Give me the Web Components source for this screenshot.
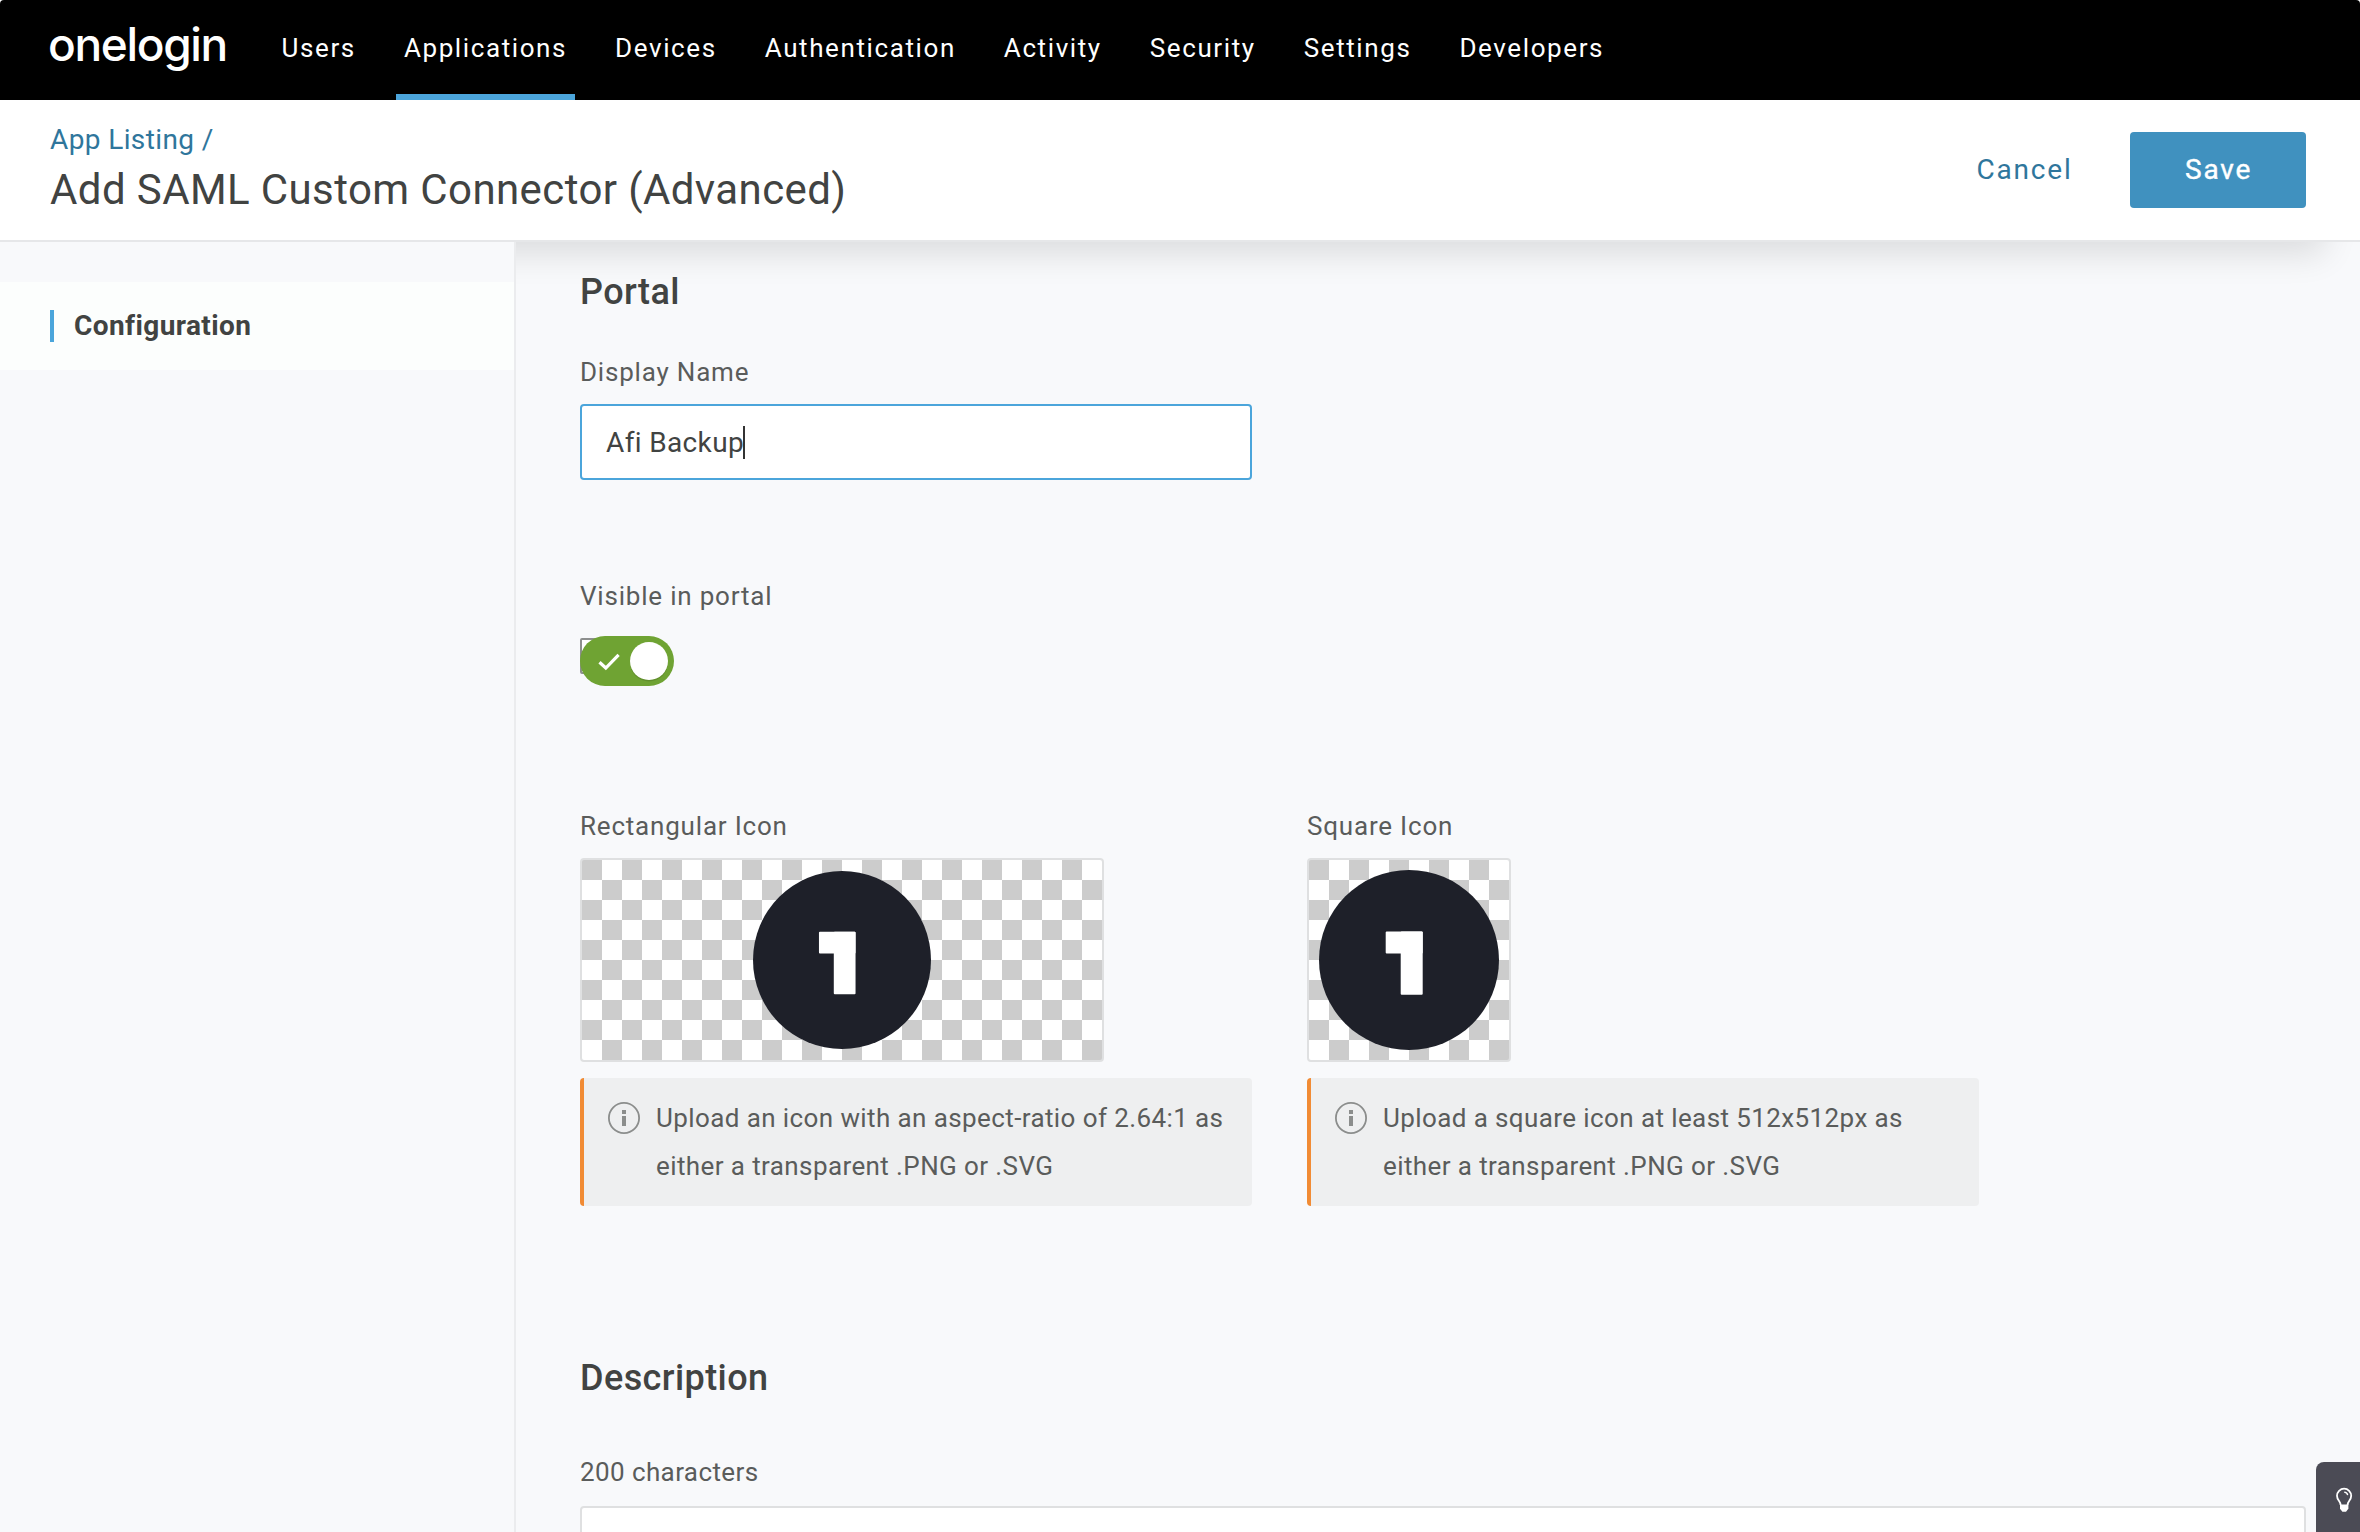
<!DOCTYPE html>
<html lang="en">
<head>
<meta charset="utf-8">
<title>OneLogin</title>
<style>
  html, body { margin: 0; height: 100%; overflow: hidden; background: #fff; }
  body { font-family: Roboto, "Liberation Sans", sans-serif; color: #414342; }
</style>
</head>
<body>
<ol-app>
  <ol-topnav slot="nav">
    <ol-nav-item>Users</ol-nav-item>
    <ol-nav-item active>Applications</ol-nav-item>
    <ol-nav-item>Devices</ol-nav-item>
    <ol-nav-item>Authentication</ol-nav-item>
    <ol-nav-item>Activity</ol-nav-item>
    <ol-nav-item>Security</ol-nav-item>
    <ol-nav-item>Settings</ol-nav-item>
    <ol-nav-item>Developers</ol-nav-item>
  </ol-topnav>
  <ol-page-header slot="header">
    <span slot="crumb">App Listing /</span>
    <span slot="title">Add SAML Custom Connector (Advanced)</span>
    <ol-button slot="actions">Cancel</ol-button>
    <ol-button slot="actions" primary>Save</ol-button>
  </ol-page-header>
  <ol-side-item slot="side">Configuration</ol-side-item>

  <ol-heading>Portal</ol-heading>
  <ol-field label="Display Name" style="margin-top:42px"><ol-input>Afi Backup</ol-input></ol-field>
  <ol-field label="Visible in portal" style="margin-top:100px;--gap:24px"><ol-toggle></ol-toggle></ol-field>
  <ol-row style="margin-top:124px">
    <ol-field label="Rectangular Icon">
      <ol-icon-preview shape="rect"></ol-icon-preview>
      <ol-note>Upload an icon with an aspect-ratio of 2.64:1 as<br>either a transparent .PNG or .SVG</ol-note>
    </ol-field>
    <ol-field label="Square Icon">
      <ol-icon-preview shape="square"></ol-icon-preview>
      <ol-note>Upload a square icon at least 512x512px as<br>either a transparent .PNG or .SVG</ol-note>
    </ol-field>
  </ol-row>
  <ol-heading style="margin-top:150px">Description</ol-heading>
  <ol-field label="200 characters" style="margin-top:56px;--gap:18px;--label-spacing:.4px"><ol-textarea></ol-textarea></ol-field>

  <ol-help slot="help"></ol-help>
</ol-app>

<script>
const define = (name, html) => {
  const tpl = document.createElement('template');
  tpl.innerHTML = html;
  customElements.define(name, class extends HTMLElement {
    constructor() {
      super();
      this.attachShadow({ mode: 'open' }).append(tpl.content.cloneNode(true));
    }
    connectedCallback() {
      const label = this.shadowRoot.querySelector('[data-label]');
      if (label) label.textContent = this.getAttribute('label');
    }
  });
};

define('ol-app', `
<style>
  :host { display: flex; flex-direction: column; height: 1532px; width: 2360px; overflow: hidden; position: relative; }
  .body { flex: 1; display: flex; min-height: 0; background: #f8f9fb; }
  aside { width: 514px; border-right: 2px solid #ebecee; padding-top: 40px; background: #f8f9fb; }
  main { flex: 1; position: relative; overflow: hidden; padding: 28px 54px 0 64px; }
  .shade { position: absolute; top: -80px; height: 92px; left: -80px; right: 35px; background: #000; opacity: .115; filter: blur(17px); }
  .content { position: relative; }
</style>
<slot name="nav"></slot>
<slot name="header"></slot>
<div class="body">
  <aside><slot name="side"></slot></aside>
  <main><div class="shade"></div><div class="content"><slot></slot></div></main>
</div>
<slot name="help"></slot>`);

define('ol-topnav', `
<style>
  :host { display: flex; flex: none; height: 100px; background: #000; color: #fff; border-radius: 4px 4px 0 0; }
  .logo { width: 225.6px; padding-left: 48px; box-sizing: content-box; font: 500 46px/96px Inter, sans-serif; letter-spacing: -1.34px; height: 92px; margin-top: -4px; }
  nav { display: flex; gap: 32px; }
</style>
<div class="logo">onelogin</div>
<nav><slot></slot></nav>`);

define('ol-nav-item', `
<style>
  :host { display: flex; align-items: center; box-sizing: border-box; height: 100px; padding: 2px 8px 0; border-bottom: 6px solid transparent; font-size: 26px; letter-spacing: 1.6px; }
  :host([active]) { border-color: #4ba5db; }
</style>
<slot></slot>`);

define('ol-page-header', `
<style>
  :host { display: flex; flex: none; justify-content: space-between; height: 140px; padding: 0 54px 0 50px; background: #fff; border-bottom: 2px solid #e6e7e9; }
  .text { padding-top: 20px; }
  .crumb { font-size: 28px; line-height: 40px; letter-spacing: .38px; color: #2f769c; }
  .title { font-size: 42px; line-height: 56px; letter-spacing: .4px; margin-top: 2px; }
  .actions { display: flex; align-items: center; gap: 57.5px; }
</style>
<div class="text"><div class="crumb"><slot name="crumb"></slot></div><div class="title"><slot name="title"></slot></div></div>
<div class="actions"><slot name="actions"></slot></div>`);

define('ol-button', `
<style>
  :host { display: flex; align-items: center; justify-content: center; box-sizing: border-box; height: 76px; padding-bottom: 2px; font-size: 28px; letter-spacing: 1.8px; color: #2f769c; }
  :host([primary]) { width: 176px; padding-left: 1px; border-radius: 4px; background: #4091bf; color: #fff; -webkit-text-stroke: .4px #fff; }
</style>
<slot></slot>`);

define('ol-side-item', `
<style>
  :host { display: flex; align-items: center; height: 88px; padding-left: 50px; background: #fcfefd; font-weight: 700; font-size: 28px; letter-spacing: .4px; }
  i { width: 4px; height: 32px; background: #4ba5db; margin-right: 20px; }
  span { padding-bottom: 2px; }
</style>
<i></i><span><slot></slot></span>`);

define('ol-heading', `
<style>:host { display: block; font-size: 36px; line-height: 44px; font-weight: 500; letter-spacing: .42px; }</style>
<slot></slot>`);

define('ol-field', `
<style>
  :host { display: block; }
  label { display: block; font-size: 26px; line-height: 32px; letter-spacing: var(--label-spacing, .8px); color: #5a5c5b; margin-bottom: var(--gap, 16px); }
</style>
<label data-label></label><slot></slot>`);

define('ol-row', `
<style>:host { display: flex; gap: 55px; }</style>
<slot></slot>`);

define('ol-input', `
<style>
  :host { display: flex; align-items: center; box-sizing: border-box; width: 672px; height: 76px; padding-left: 24px; border: 2px solid #4ba5db; border-radius: 4px; background: #fff; font-size: 28px; letter-spacing: .36px; }
  i { width: 2px; height: 33px; margin-left: -1px; background: #333; }
</style>
<slot></slot><i></i>`);

define('ol-toggle', `
<style>
  :host { display: block; position: relative; width: 94px; height: 50px; }
  .box { position: absolute; left: 0; top: 2px; width: 36px; height: 36px; box-sizing: border-box; border: 2px solid #8d8f8e; border-radius: 2px; background: #fff; }
  svg { position: relative; display: block; }
</style>
<div class="box"></div>
<svg width="94" height="50" viewBox="0 0 94 50">
  <rect width="94" height="50" rx="25" fill="#6fa333"/>
  <circle cx="69" cy="26.5" r="19" fill="#000" opacity=".12"/>
  <circle cx="69" cy="25" r="19" fill="#fff"/>
  <path d="M19.500 26.300l6.300 5.700L38.600 18.800" fill="none" stroke="#fff" stroke-width="3.2"/>
</svg>`);

define('ol-icon-preview', `
<style>
  :host { display: flex; align-items: center; justify-content: center; box-sizing: border-box; height: 204px; width: 204px; border: 2px solid #dfe0e1; border-radius: 4px;
    background: repeating-conic-gradient(#fff 0 25%, #ccc 0 50%) 0 0 / 40px 40px; }
  :host([shape=rect]) { width: 524px; }
  svg { width: 180px; height: 180px; }
  :host([shape=rect]) svg { width: 178px; height: 178px; }
</style>
<svg viewBox="0 0 180 180">
  <circle cx="90" cy="90" r="90" fill="#1e2029"/>
  <rect x="66.7" y="61.500" width="37" height="22" rx="1" fill="#fff"/>
  <rect x="81.700" y="61.500" width="22" height="63.200" rx="1" fill="#fff"/>
</svg>`);

define('ol-note', `
<style>
  :host { display: flex; box-sizing: border-box; width: 672px; height: 128px; margin-top: 16px; padding: 16px 0 0 24px; border-left: 4px solid #f18b34; border-radius: 4px; background: #eeeff0; color: #5a5c5b; font-size: 26px; line-height: 48px; letter-spacing: .4px; white-space: nowrap; }
  svg { flex: none; margin: 8px 16px 0 0; }
</style>
<svg width="32" height="32" viewBox="0 0 32 32">
  <circle cx="16" cy="16" r="15.1" fill="none" stroke="#8b8d8c" stroke-width="1.8"/>
  <rect x="14" y="8" width="4" height="4" fill="#8b8d8c"/>
  <rect x="14" y="14" width="4" height="10" fill="#8b8d8c"/>
</svg>
<div><slot></slot></div>`);

define('ol-textarea', `
<style>:host { display: block; height: 160px; border: 2px solid #dfe0e1; border-radius: 4px; background: #fff; }</style>`);

define('ol-help', `
<style>
  :host { display: block; position: absolute; right: 0; bottom: 0; width: 44px; height: 70px; background: #4b4b55; border-radius: 8px 0 0 0; }
  svg { display: block; }
</style>
<svg width="44" height="70" viewBox="0 0 44 70">
  <path d="M24.600 43C24.600 39 21 38.500 21 33.800a7.100 7.100 0 0 1 14.200 0C35.200 38.500 31.600 39 31.600 43" fill="none" stroke="#fff" stroke-width="1.8"/>
  <path d="M24 42.500h8.400v4.300l-2.400 3h-3.600l-2.400-3z" fill="#fff"/>
  <path d="M28.200 30.200q3 .3 3.500 3" fill="none" stroke="#fff" stroke-width="1.300"/>
</svg>`);
</script>
</body>
</html>
